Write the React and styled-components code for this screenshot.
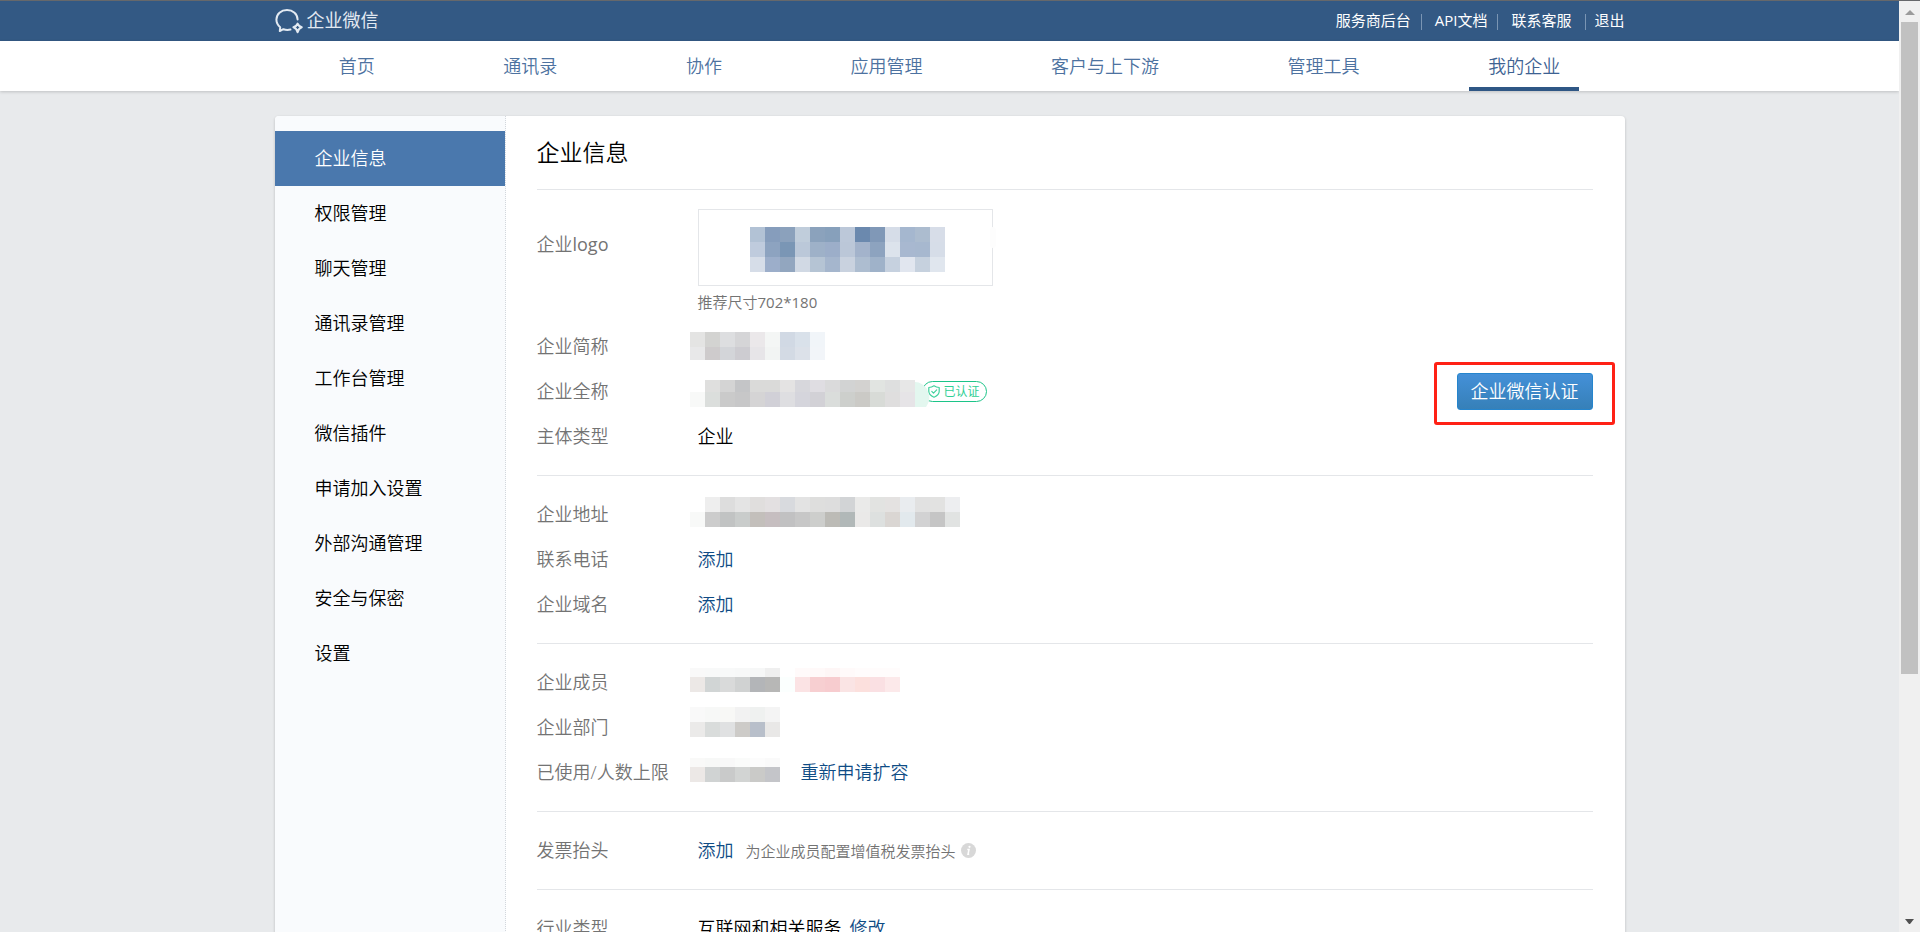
import React from "react";
import styled, { createGlobalStyle, css } from "styled-components";

const GlobalStyle = createGlobalStyle`
  *, *::before, *::after { box-sizing: border-box; }
  body {
    margin: 0;
    background: #e8eaec;
    color: #000;
    font-family: "Open Sans", "Noto Sans CJK SC", sans-serif;
    font-size: 18px;
    font-weight: 350;
  }
  a { text-decoration: none; }
  ul, dl, dd { margin: 0; padding: 0; list-style: none; }
`;

const Window = styled.div`
  display: flex;
  height: 100vh;
  overflow: hidden;
  border-top: 1px solid #66686b;
`;

const Page = styled.div`
  flex: 1;
  min-width: 0;
  overflow: hidden;
`;

const Container = styled.div`
  max-width: 1350px;
  margin: 0 auto;
`;

const TopBar = styled.header`
  background: #335984;
`;

const TopBarInner = styled(Container)`
  display: flex;
  align-items: center;
  justify-content: space-between;
  height: 40px;
  padding-bottom: 2px;
`;

const Brand = styled.a`
  display: flex;
  align-items: center;
  gap: 3px;
  color: #e3eaf2;
  font-weight: 400;
  line-height: 38px;
`;

const TopLinks = styled.nav`
  display: flex;
  align-items: center;
  font-size: 15px;
  font-weight: 400;
  line-height: 38px;
`;

const TopLink = styled.a`
  color: #fff;
`;

const Divider = styled.span`
  width: 1px;
  height: 16px;
  margin: ${(p) => (p.$tightAfter ? "4px 8px 0 14px" : "4px 13px 0 10px")};
  background: #7a95b3;
`;

const NavBar = styled.nav`
  background: #fff;
  box-shadow: 0 1px 3px rgba(0, 0, 0, 0.18);
`;

const NavList = styled(Container).attrs({ as: "ul" })`
  display: flex;
  justify-content: space-around;
`;

const NavLink = styled.a`
  display: block;
  height: 50px;
  padding: 0 19px;
  color: #4d72a0;
  line-height: 50px;
  ${(p) =>
    p.$active &&
    css`
      border-bottom: 4px solid #2f5785;
      color: #3d6292;
    `}
`;

const Card = styled(Container)`
  display: flex;
  margin-top: 25px;
  border-radius: 4px;
  background: #fff;
  box-shadow: 0 1px 3px rgba(0, 0, 0, 0.2);
`;

const Sidebar = styled.aside`
  flex: 0 0 231px;
  padding-top: 15px;
  border-right: 1px dotted #d3d7dc;
  border-radius: 4px 0 0 4px;
  background: #f9fbfd;
`;

const SideLink = styled.a`
  display: block;
  padding-left: 40px;
  background: ${(p) => (p.$active ? "#4a78ad" : "transparent")};
  color: ${(p) => (p.$active ? "#fff" : "#000")};
  line-height: 55px;
`;

const Main = styled.main`
  flex: 1;
  min-width: 0;
  padding: 0 32px 40px 31px;
`;

const Title = styled.h1`
  margin: 0;
  font-size: 23px;
  font-weight: 350;
  line-height: 73px;
`;

const Section = styled.dl`
  padding: 16px 0;
  border-top: 1px solid #e4e6e9;
`;

const Row = styled.div`
  display: flex;
  line-height: 45px;
`;

const LogoRow = styled(Row)`
  padding: 3px 0 6px;
`;

const Label = styled.dt`
  flex: 0 0 161px;
  color: #737373;
  line-height: ${(p) => (p.$logo ? "70px" : "45px")};
`;

const Latin = styled.span`
  font-weight: 400;
`;

const Value = styled.dd`
  display: flex;
  flex: 1;
  align-items: center;
`;

const LogoValue = styled.dd`
  display: flex;
  flex-direction: column;
`;

const LogoBox = styled.div`
  position: relative;
  display: flex;
  align-items: center;
  justify-content: center;
  width: 295px;
  height: 77px;
  padding: 4px 0 0 4px;
  border: 1px solid #e4e6e9;

  &::after {
    content: "";
    position: absolute;
    top: 17px;
    right: -4px;
    width: 6px;
    height: 21px;
    border-radius: 3px;
    background: #fdfdfd;
  }
`;

const Hint = styled.span`
  color: #737373;
  font-size: 15px;
  line-height: 32px;
`;

const TextLink = styled.a`
  color: #0f4c85;
`;

const Spaced = styled.span`
  display: flex;
  align-items: center;
  gap: ${(p) => p.$gap}px;
`;

const MosaicSvg = styled.svg`
  position: relative;
  z-index: 1;
  flex: none;
  display: block;
  margin-left: ${(p) => (p.$outdent ? "-8px" : "0")};
`;

const Badge = styled.span`
  display: flex;
  align-items: center;
  gap: 4px;
  height: 21px;
  margin-left: -8px;
  padding: 0 6px 0 5px;
  border: 1px solid #1cc488;
  border-radius: 11px;
  color: #2fcf95;
  font-size: 12px;
  font-weight: 400;
  line-height: 19px;
`;

const ButtonSlot = styled.div`
  position: relative;
  margin-left: auto;

  &::after {
    content: "";
    position: absolute;
    inset: -11px -22px -15px -23px;
    border: 3px solid #ff2115;
    border-radius: 3px;
    pointer-events: none;
  }
`;

const PrimaryButton = styled.button`
  display: block;
  height: 37px;
  padding: 0 13px;
  border: 1px solid #2585cd;
  border-radius: 3px;
  background: linear-gradient(#4490d8, #3680b8);
  color: #fff;
  font: inherit;
  line-height: 33px;
`;

const ScrollTrack = styled.div`
  display: flex;
  flex-direction: column;
  align-items: center;
  flex: 0 0 21px;
  background: #f0f0f0;
`;

const ScrollThumb = styled.div`
  width: 17px;
  height: 70%;
  background: #c1c1c1;
`;

const ScrollArrow = styled.svg`
  display: block;
  flex: none;
  margin-top: ${(p) => (p.$end ? "auto" : "0")};
`;

function Mosaic({ rows, heights, top = 0, height = 45, outdent = true, children }) {
  const cols = Math.max(...rows.map((r) => r.length));
  let y = top;
  return (
    <MosaicSvg
      $outdent={outdent}
      width={cols * 15}
      height={height}
      shapeRendering="crispEdges"
      aria-hidden="true"
    >
      {rows.map((row, r) => {
        const cells = row.map((c, i) =>
          c ? <rect key={i} x={i * 15} y={y} width="15" height={heights[r]} fill={"#" + c} /> : null
        );
        y += heights[r];
        return <g key={r}>{cells}</g>;
      })}
      {children}
    </MosaicSvg>
  );
}

const hex = (s) => s.split(" ").map((c) => (c === "-" ? null : c));

const LOGO = [
  "b2c2d5 869dbc 8ba1bc c0cddb 8ba2bc 87a0bb bcc8d9 6b89ae 8098b7 d6dde8 a5b7cf acbccf d7dde8",
  "bfcbdd 8da3c0 7a96b5 bbc8d9 9eb1c8 9caec9 bbc7d8 a3b3cb 8da3bf dce3ec a8b8d0 a7b8cf d6dde8",
  "d6dde8 9caeca 92a6bf d1d9e4 b5c4d4 a5b6cd c9d2df adbdd0 9fb2c9 c6d1df e1e6ef c6d1de e0e6ee",
].map(hex);
const SHORT_NAME = [
  "e4e4e3 d3d3d1 dddee0 d5d5d7 ebe8ea f4f6f5 d1d9e4 d9e1ea f1f5f9",
  "e8e8e9 cecbcc d3d5d9 cdccd1 e7e5e8 f2f4f3 d3dae4 dce1e9 f2f5f9",
].map(hex);
const FULL_NAME = [
  "- dfdfde d4d4d4 c4c5c7 dadad9 dadad9 e4e3e3 d7d7dc dfdde2 dadadb d2d3d3 d3d2d0 e1e4e1 dedfdf e7e7e7 -",
  "f8f9f8 dbdedc cacaca c7c7c8 d5d4d5 d1d0d7 dedee1 d5d5dc d2d1d6 dadddb cdcfcc cbcac6 d8dbd7 dfdede e6e4e7 -",
].map(hex);
const ADDRESS = [
  "- eeeeee dddddd e4e4e4 e0dedd e3e0e1 d8dade e3e3e3 dededd dddddd d2d4d6 eaeae9 e2e3e1 e4e2e1 e9ecef e1e1e1 e2e2e1 edeef0",
  "f8f9f8 cccccc c1c3c3 c9cccb c3bfbb c6bec0 c1c1c2 c7c7c7 cdcecc bcbbb6 b1b8b8 eae9e8 dde0df dad6d3 e2e9ed d2d2d3 c5c5c5 e1e3e2",
].map(hex);
const MEMBERS = [
  "f9f9f9 f8f9f9 f8f9f9 f7f8f8 f6f7f7 efefef - fffafa fff9f9 fef6f6 fffafa fffcfc fffcfc fffcfc",
  "ece8e6 d1d5d5 d9dada d0d2d2 b3b5b8 b7b7b6 fbfffe fbe3e4 f7cfd1 f7cccf fae4e4 fce0dd fae0e3 fce9ea",
].map(hex);
const DEPARTMENTS = [
  "f9f9f9 f7f8f7 f8f8f6 f2f2f2 eff1f0 f4f4f4",
  "ebeae9 d9dcdb e0e1e2 cdcbc8 b8bfca e9e8e7",
].map(hex);
const USAGE = [
  "f9f9f8 f7f8f7 f8f8f8 fafbfa fcfcfc fafafa",
  "ece8e6 d0d3d3 c9caca d2d4d3 cacac8 c4c5c9",
].map(hex);

const NAV = ["首页", "通讯录", "协作", "应用管理", "客户与上下游", "管理工具", "我的企业"];
const SIDE = [
  "企业信息",
  "权限管理",
  "聊天管理",
  "通讯录管理",
  "工作台管理",
  "微信插件",
  "申请加入设置",
  "外部沟通管理",
  "安全与保密",
  "设置",
];

function BrandIcon() {
  return (
    <svg width="29" height="28" viewBox="0 0 29 28" fill="none" stroke="#e3eaf2" strokeWidth="2" strokeLinecap="round" strokeLinejoin="round" aria-hidden="true">
      <path d="M15.500 23.600c-2.300.5-5 .4-7.100-.4L4.800 25l.4-3.700C2.700 19.200 1.400 16.600 1.400 13.600 1.400 7.900 6.100 4 12 4s10.600 3.900 10.600 9.600" />
      <path d="M22.600 17.600c.6 1.700 2 3 4.200 3.700-2.200.6-3.500 2-4.200 5-.7-3-2-4.400-4.200-5 2.200-.7 3.600-2 4.200-3.700z" />
    </svg>
  );
}

function ShieldIcon() {
  return (
    <svg width="12" height="13" viewBox="0 0 12 13" fill="none" stroke="#3fd29c" strokeWidth="1.200" strokeLinecap="round" strokeLinejoin="round" aria-hidden="true">
      <path d="M6 .8c1.500 1 3.200 1.600 5.200 1.700v3.700c0 2.800-2 4.700-5.200 6-3.200-1.300-5.200-3.200-5.200-6V2.500C2.800 2.400 4.500 1.800 6 .8z" />
      <path d="M3.800 6.400l1.700 1.700 3.200-3.200" />
    </svg>
  );
}

function InfoIcon() {
  return (
    <svg width="15" height="15" viewBox="0 0 15 15" aria-hidden="true">
      <circle cx="7.500" cy="7.500" r="7.500" fill="#d8d8d8" />
      <circle cx="8.500" cy="3.800" r="1.100" fill="#fff" />
      <path d="M6.300 6.500h1.700l-1 4.800h1.200" fill="none" stroke="#fff" strokeWidth="1.500" />
    </svg>
  );
}

export default function App() {
  return (
    <>
      <GlobalStyle />
      <Window>
        <Page>
          <TopBar>
            <TopBarInner>
              <Brand href="#">
                <BrandIcon />
                企业微信
              </Brand>
              <TopLinks>
                <TopLink href="#">服务商后台</TopLink>
                <Divider />
                <TopLink href="#">API文档</TopLink>
                <Divider />
                <TopLink href="#">联系客服</TopLink>
                <Divider $tightAfter />
                <TopLink href="#">退出</TopLink>
              </TopLinks>
            </TopBarInner>
          </TopBar>
          <NavBar>
            <NavList>
              {NAV.map((name) => (
                <li key={name}>
                  <NavLink href="#" $active={name === "我的企业"}>
                    {name}
                  </NavLink>
                </li>
              ))}
            </NavList>
          </NavBar>
          <Card>
            <Sidebar>
              <ul>
                {SIDE.map((name, i) => (
                  <li key={name}>
                    <SideLink href="#" $active={i === 0}>
                      {name}
                    </SideLink>
                  </li>
                ))}
              </ul>
            </Sidebar>
            <Main>
              <Title>企业信息</Title>
              <Section>
                <LogoRow>
                  <Label $logo>
                    企业<Latin>logo</Latin>
                  </Label>
                  <LogoValue>
                    <LogoBox>
                      <Mosaic rows={LOGO} heights={[15, 15, 15]} outdent={false} />
                    </LogoBox>
                    <Hint>
                      推荐尺寸<Latin>702*180</Latin>
                    </Hint>
                  </LogoValue>
                </LogoRow>
                <Row>
                  <Label>企业简称</Label>
                  <Value>
                    <Mosaic rows={SHORT_NAME} heights={[15, 13]} top={8} />
                  </Value>
                </Row>
                <Row>
                  <Label>企业全称</Label>
                  <Value>
                    <Mosaic rows={FULL_NAME} heights={[12, 15]} top={11}>
                      <path
                        d="M225 13c5 0 9 3 12 7l2 6c1 5-1 9-3 12h-11z"
                        fill="#e3f7ef"
                        shapeRendering="auto"
                      />
                    </Mosaic>
                    <Badge>
                      <ShieldIcon />
                      已认证
                    </Badge>
                    <ButtonSlot>
                      <PrimaryButton type="button">企业微信认证</PrimaryButton>
                    </ButtonSlot>
                  </Value>
                </Row>
                <Row>
                  <Label>主体类型</Label>
                  <Value>企业</Value>
                </Row>
              </Section>
              <Section>
                <Row>
                  <Label>企业地址</Label>
                  <Value>
                    <Mosaic rows={ADDRESS} heights={[15, 15]} top={5} />
                  </Value>
                </Row>
                <Row>
                  <Label>联系电话</Label>
                  <Value>
                    <TextLink href="#">添加</TextLink>
                  </Value>
                </Row>
                <Row>
                  <Label>企业域名</Label>
                  <Value>
                    <TextLink href="#">添加</TextLink>
                  </Value>
                </Row>
              </Section>
              <Section>
                <Row>
                  <Label>企业成员</Label>
                  <Value>
                    <Mosaic rows={MEMBERS} heights={[9, 15]} top={8} />
                  </Value>
                </Row>
                <Row>
                  <Label>企业部门</Label>
                  <Value>
                    <Mosaic rows={DEPARTMENTS} heights={[15, 15]} top={2} />
                  </Value>
                </Row>
                <Row>
                  <Label>已使用/人数上限</Label>
                  <Value>
                    <Spaced $gap={21}>
                      <Mosaic rows={USAGE} heights={[9, 15]} top={8} />
                      <TextLink href="#">重新申请扩容</TextLink>
                    </Spaced>
                  </Value>
                </Row>
              </Section>
              <Section>
                <Row>
                  <Label>发票抬头</Label>
                  <Value>
                    <Spaced $gap={12}>
                      <TextLink href="#">添加</TextLink>
                      <Spaced $gap={5}>
                        <Hint>为企业成员配置增值税发票抬头</Hint>
                        <InfoIcon />
                      </Spaced>
                    </Spaced>
                  </Value>
                </Row>
              </Section>
              <Section>
                <Row>
                  <Label>行业类型</Label>
                  <Value>
                    <Spaced $gap={8}>
                      互联网和相关服务
                      <TextLink href="#">修改</TextLink>
                    </Spaced>
                  </Value>
                </Row>
              </Section>
            </Main>
          </Card>
        </Page>
        <ScrollTrack aria-hidden="true">
          <ScrollArrow width="21" height="21">
            <path d="M6 14l5-5 5 5z" fill="#9b9b9b" />
          </ScrollArrow>
          <ScrollThumb />
          <ScrollArrow $end width="21" height="21">
            <path d="M6 8h9l-4 5h-1z" fill="#505050" />
          </ScrollArrow>
        </ScrollTrack>
      </Window>
    </>
  );
}
